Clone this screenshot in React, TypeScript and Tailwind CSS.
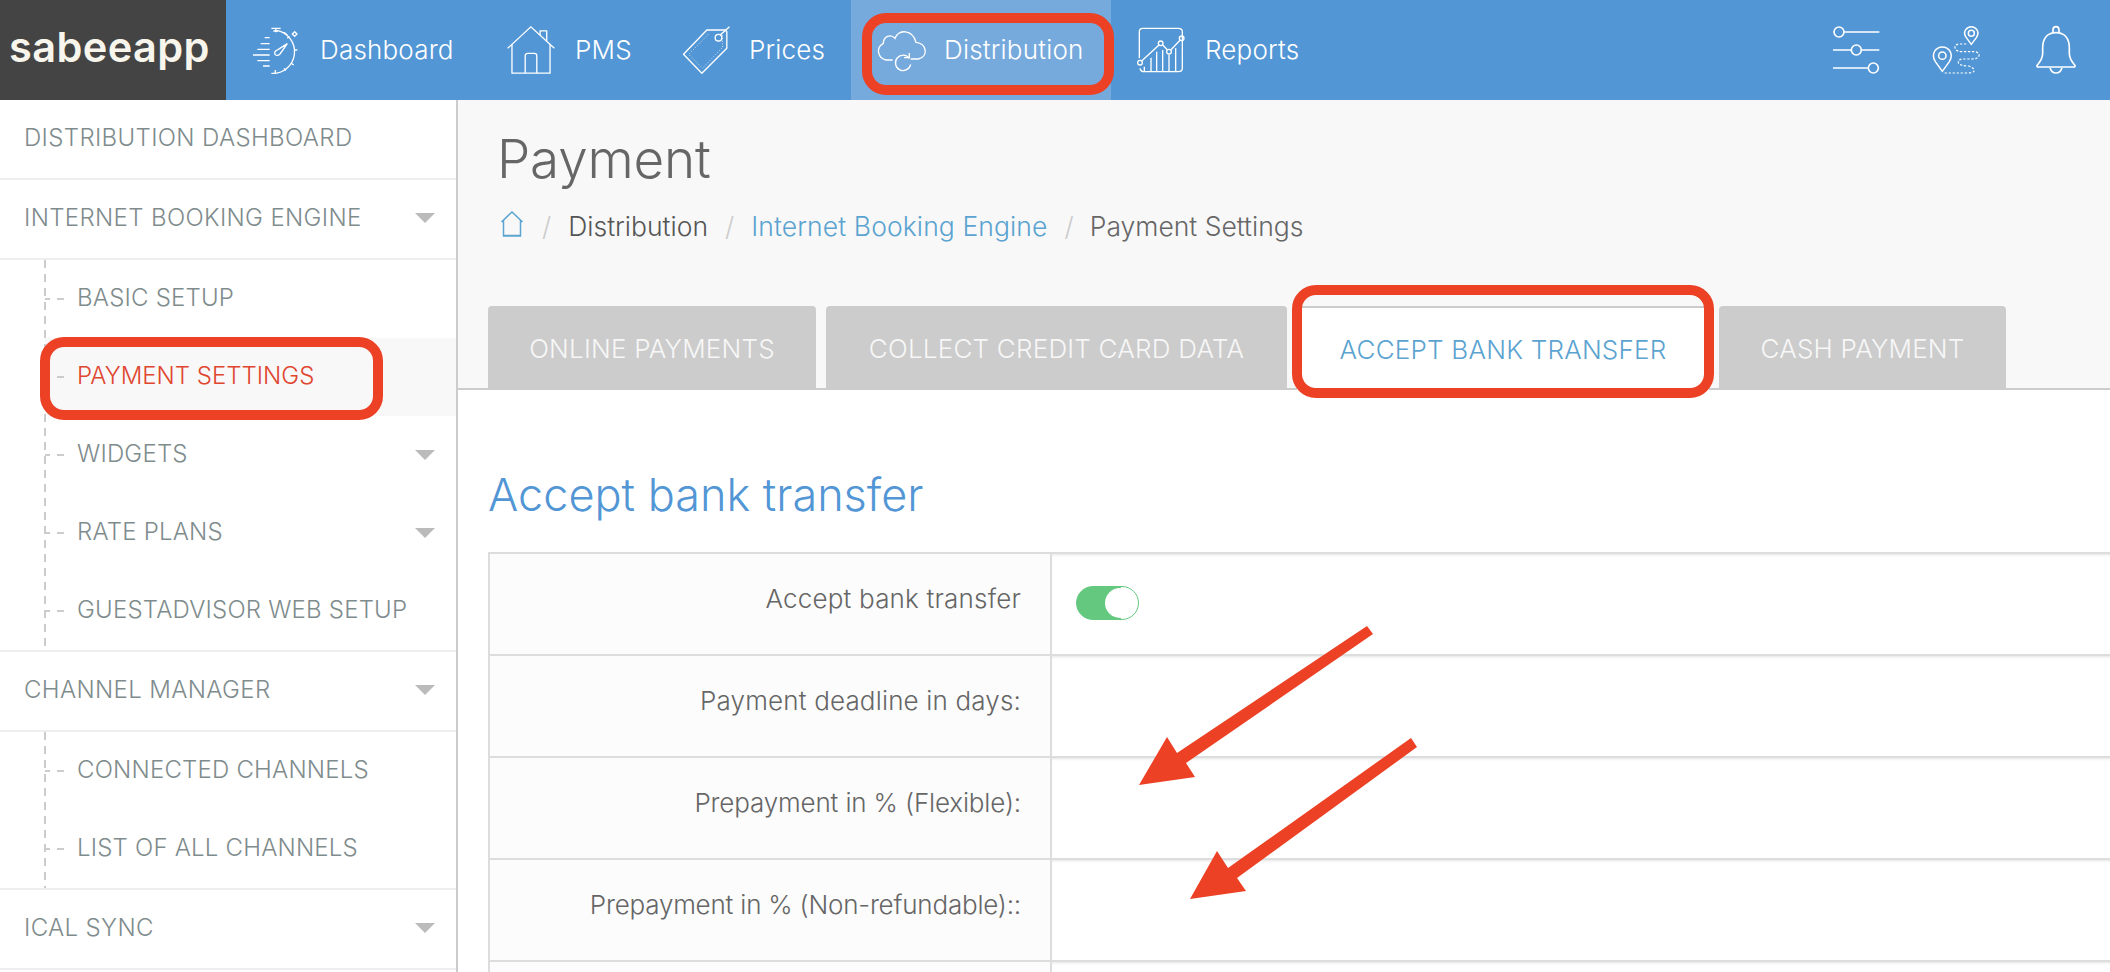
import React from "react";

const NavIcons = {
  dashboard: (
    <svg width="45" height="50" viewBox="25 30 135 150" fill="none" stroke="#fff" strokeWidth="4">
      <path d="M95 46 A65 65 0 0 1 80 175" />
      <path d="M80 40H108M93 40V52M86 48H100" />
      <path d="M118 52l10 8M150 50l7 7-7 7-7-7z" />
      <path d="M60 68H75M48 86H75M38 103H75M25 120H75M38 137H75M55 153H75" />
      <path d="M128 86L106 117Q97 125 91 118Q87 109 100 104Z" />
      <path d="M148 105H158M128 70l6-6M140 145l7 5M118 160l5 7M92 165V175" />
    </svg>
  ),
  pms: (
    <svg width="48" height="50" viewBox="785 30 145 150" fill="none" stroke="#fff" strokeWidth="4">
      <path d="M787 100L857 35L928 100" />
      <path d="M885 60V47H905V77" />
      <path d="M800 88V175H915V88" />
      <path d="M840 175V122Q840 115 848 115H868Q875 115 875 122V175" />
    </svg>
  ),
  prices: (
    <svg width="49" height="50" viewBox="36 30 146 150" fill="none" stroke="#fff" strokeWidth="4" strokeLinejoin="round">
      <path d="M110 45H165L170 50V100L95 175L40 118Z" />
      <circle cx="145" cy="68" r="10" />
      <path d="M150 60L178 35" />
      <path d="M115 57L56 118L97 160L157 97V60" strokeDasharray="2 6" strokeWidth="3" />
    </svg>
  ),
  distribution: (
    <svg width="50" height="50" viewBox="618 30 150 150" fill="none" stroke="#fff" strokeWidth="4">
      <path d="M668 135H648C625 130 615 100 640 85C640 65 662 55 675 70C685 42 728 42 738 82C772 86 775 125 745 132H722" />
      <path d="M718 130A23 23 0 1 0 722 148" />
      <path d="M702 128H718V114" />
    </svg>
  ),
  reports: (
    <svg width="48" height="50" viewBox="36 30 144 150" fill="none" stroke="#fff" strokeWidth="4">
      <path d="M43 130V50Q43 40 53 40H160Q172 40 172 50V160Q172 170 160 170H58Q47 170 45 160" />
      <path d="M50 138L102 90M113 90L127 104M138 104L165 76" />
      <circle cx="45" cy="143" r="7" />
      <circle cx="107" cy="85" r="7" />
      <circle cx="132" cy="110" r="7" />
      <circle cx="170" cy="70" r="7" />
      <path d="M58 155V170M78 128V170M95 110V170M113 105V170M132 120V170M152 100V170" />
    </svg>
  ),
};

const navItems: { key: keyof typeof NavIcons; label: string; cls: string; active?: boolean }[] = [
  { key: "dashboard", label: "Dashboard", cls: "w-[254px] pl-[27px] gap-[22px]" },
  { key: "pms", label: "PMS", cls: "w-[175px] pl-[27px] gap-[20px]" },
  { key: "prices", label: "Prices", cls: "w-[196px] pl-[27px] gap-[18px]" },
  { key: "distribution", label: "Distribution", cls: "w-[260px] pl-[25px] gap-[18px]", active: true },
  { key: "reports", label: "Reports", cls: "w-[190px] pl-[26px] gap-[20px]" },
];

function RightIcons() {
  return (
    <div className="ml-auto flex items-center pr-[33px]">
      <svg width="48" height="50" viewBox="155 75 144 150" fill="none" stroke="#fff" strokeWidth="5">
        <path d="M192 96H297M158 150H212M244 150H297M158 204H262" />
        <circle cx="176" cy="96" r="15" />
        <circle cx="228" cy="150" r="15" />
        <circle cx="279" cy="204" r="15" />
      </svg>
      <svg className="ml-[52px]" width="49" height="50" viewBox="455 75 147 150" fill="none" stroke="#fff" strokeWidth="4.5">
        <path d="M486 214L465 185C450 160 468 141 486 141C504 141 522 160 507 185Z" />
        <circle cx="486" cy="167" r="11" />
        <path d="M573 133L558 113C545 95 560 80 573 80C586 80 600 95 588 113Z" />
        <circle cx="573" cy="100" r="9" />
        <path
          d="M558 132H535Q520 135 525 147Q530 155 545 155H585Q600 160 595 170Q590 177 575 177H545Q530 180 535 190Q540 197 565 198Q585 205 580 215Q575 219 555 219H490"
          strokeDasharray="7 5"
          strokeWidth="3.5"
        />
      </svg>
      <svg className="ml-[54px]" width="42" height="50" viewBox="765 75 126 150" fill="none" stroke="#fff" strokeWidth="5" strokeLinejoin="round">
        <path d="M828 98C800 98 788 118 788 145V160C788 178 778 188 772 195Q768 201 776 201H880Q888 201 884 195C878 188 868 178 868 160V145C868 118 856 98 828 98Z" />
        <path d="M819 98V90Q819 80 828 80Q837 80 837 90V98" />
        <path d="M810 203Q815 219 828 219Q841 219 846 203" />
      </svg>
    </div>
  );
}

function Header() {
  return (
    <header className="flex h-[100px] bg-[#5296d5]">
      <div className="flex w-[226px] shrink-0 items-center bg-[#444444] pl-[9px] pb-[5px]">
        <span className="text-[41.5px] font-semibold tracking-[0.4px] text-[#f7f5ec]">sabeeapp</span>
      </div>
      {navItems.map((n) => (
        <div key={n.key} className={`flex shrink-0 items-center ${n.cls} ${n.active ? "bg-[#76a9dc]" : ""}`}>
          {NavIcons[n.key]}
          <span className="pb-[1px] text-[26px] font-light tracking-[0.2px] text-white">{n.label}</span>
        </div>
      ))}
      <RightIcons />
    </header>
  );
}

function Caret() {
  return <span className="ml-auto mr-[21px] h-0 w-0 border-x-[10px] border-t-[10px] border-x-transparent border-t-[#bbbbbb]" />;
}

function TopRow({ label, caret }: { label: string; caret?: boolean }) {
  return (
    <div className="flex h-[80px] items-center border-b-2 border-[#eeeeee] pb-[2px] pl-[24px]">
      <span className="text-[24px] font-light tracking-[0.35px] text-[#7f8c8d]">{label}</span>
      {caret && <Caret />}
    </div>
  );
}

function SubRow({ label, caret, active }: { label: string; caret?: boolean; active?: boolean }) {
  return (
    <div className="h-[78px] pl-[45px]">
      <div className={`flex h-full items-center ${active ? "bg-[#f8f8f8]" : ""}`}>
        <svg width="19" height="2" className="shrink-0" fill="none" stroke="#cccccc" strokeWidth="2">
          <path d="M0 1H5M12 1H19" />
        </svg>
        <span className={`ml-[13px] pb-[3px] text-[24px] font-light ${active ? "tracking-[0px] text-[#e0452f]" : "tracking-[0.2px] text-[#7f8c8d]"}`}>{label}</span>
        {caret && <Caret />}
      </div>
    </div>
  );
}

function SubList({ children }: { children: React.ReactNode }) {
  return (
    <div className="relative">
      <span className="absolute bottom-0 left-[44px] top-0 w-[2px] bg-[repeating-linear-gradient(to_bottom,#cccccc_0,#cccccc_8px,transparent_8px,transparent_14px)]" />
      {children}
    </div>
  );
}

function Sidebar() {
  return (
    <aside className="h-[872px] w-[458px] shrink-0 overflow-hidden border-r-2 border-[#cccccc] bg-white">
      <TopRow label="DISTRIBUTION DASHBOARD" />
      <TopRow label="INTERNET BOOKING ENGINE" caret />
      <div className="border-b-2 border-[#eeeeee]">
        <SubList>
          <SubRow label="BASIC SETUP" />
          <SubRow label="PAYMENT SETTINGS" active />
          <SubRow label="WIDGETS" caret />
          <SubRow label="RATE PLANS" caret />
          <SubRow label="GUESTADVISOR WEB SETUP" />
        </SubList>
      </div>
      <TopRow label="CHANNEL MANAGER" caret />
      <div className="border-b-2 border-[#eeeeee]">
        <SubList>
          <SubRow label="CONNECTED CHANNELS" />
          <SubRow label="LIST OF ALL CHANNELS" />
        </SubList>
      </div>
      <TopRow label="ICAL SYNC" caret />
    </aside>
  );
}

function Tab({ label, width, active }: { label: string; width: string; active?: boolean }) {
  return (
    <div
      className={`flex items-center justify-center rounded-t-[4px] text-[26px] font-light ${width} ${
        active ? "h-[84px] border-t-2 border-[#cccccc] bg-white text-[#5ba3d0]" : "h-[82px] bg-[#cccccc] pt-[3px] text-[#f7f7f7]"
      }`}
    >
      <span className="tracking-[0.22px]">{label}</span>
    </div>
  );
}

const rows = [
  { label: "Accept bank transfer", track: "tracking-[0.2px]" },
  { label: "Payment deadline in days:", track: "tracking-[0.16px]" },
  { label: "Prepayment in % (Flexible):", track: "tracking-[-0.15px]" },
  { label: "Prepayment in % (Non-refundable)::", track: "tracking-[-0.2px]" },
  { label: "", track: "" },
];

function Toggle() {
  return (
    <div className="mt-[32px] ml-[24px] flex h-[34px] w-[63px] items-center justify-end rounded-full border border-[#64c97f] bg-[linear-gradient(to_right,#64c97f_72%,#ffffff_72%)] pr-[3px]">
      <span className="h-[30px] w-[30px] rounded-full bg-white" />
    </div>
  );
}

function Main() {
  return (
    <main className="min-w-0 flex-1 overflow-hidden bg-white">
      <div className="h-[206px] bg-[#f8f8f8] pl-[39px]">
        <h1 className="pt-[29px] text-[53px] leading-[60px] font-light tracking-[-0.2px] text-[#666666]">Payment</h1>
        <nav className="mt-[18px] flex h-[40px] items-center pl-[3px] text-[26.5px] font-light">
          <svg width="24" height="26" viewBox="0 0 24 26" fill="none" stroke="#5ba3d0" strokeWidth="1.5" className="mb-[6px]">
            <path d="M1.5 11L12 1L22.5 11M3.5 9.5V25H20.5V9.5M3.5 24.5H20.5" />
          </svg>
          <span className="ml-[18px] text-[#cccccc]">/</span>
          <span className="ml-[17px] text-[#555555]">Distribution</span>
          <span className="ml-[17px] text-[#cccccc]">/</span>
          <span className="ml-[17px] tracking-[0.1px] text-[#5ba3d0]">Internet Booking Engine</span>
          <span className="ml-[17px] text-[#cccccc]">/</span>
          <span className="ml-[16px] text-[#666666]">Payment Settings</span>
        </nav>
      </div>
      <div className="flex h-[84px] items-start gap-[10px] border-b-2 border-[#cccccc] bg-[#f8f8f8] pl-[30px]">
        <Tab label="ONLINE PAYMENTS" width="w-[328px]" />
        <Tab label="COLLECT CREDIT CARD DATA" width="w-[461px]" />
        <Tab label="ACCEPT BANK TRANSFER" width="w-[412px]" active />
        <Tab label="CASH PAYMENT" width="w-[287px]" />
      </div>
      <div className="pl-[30px]">
        <h2 className="pt-[75px] pb-[27px] text-[45px] leading-[60px] font-light text-[#5296d5]">Accept bank transfer</h2>
        <div className="border-l-2 border-[#dddddd]">
          {rows.map((r, i) => (
            <div key={i} className="flex h-[102px] border-t-2 border-[#dddddd]">
              <div className={`w-[562px] shrink-0 border-r-2 border-[#dddddd] bg-[#fcfcfc] pt-[25px] pr-[29px] text-right text-[26px] font-light text-[#666666] ${r.track}`}>
                {r.label}
              </div>
              <div className="flex-1 shadow-[inset_0_3px_3px_-2px_#e4e4e4]">{i === 0 && <Toggle />}</div>
            </div>
          ))}
        </div>
      </div>
    </main>
  );
}

function Annotations() {
  return (
    <>
      <div className="absolute left-[862px] top-[13px] h-[82px] w-[252px] rounded-[24px] border-[10px] border-[#ec4125]" />
      <div className="absolute left-[40px] top-[337px] h-[83px] w-[343px] rounded-[24px] border-[10px] border-[#ec4125]" />
      <div className="absolute left-[1292px] top-[285px] h-[113px] w-[422px] rounded-[24px] border-[10px] border-[#ec4125]" />
      <svg className="absolute left-[1130px] top-[620px]" width="300" height="290" viewBox="1130 620 300 290" fill="#ec4125">
        <polygon points="1139,785 1167,737 1177,753 1367,626 1373,634 1186,763 1195,777" />
        <polygon points="1190,899 1217,851 1228,868 1411,738 1417,747 1237,878 1246,891" />
      </svg>
    </>
  );
}

export default function App() {
  return (
    <div className="relative h-[972px] w-[2110px] overflow-hidden bg-white font-['Inter','Liberation_Sans',sans-serif]">
      <Header />
      <div className="flex">
        <Sidebar />
        <Main />
      </div>
      <Annotations />
    </div>
  );
}
